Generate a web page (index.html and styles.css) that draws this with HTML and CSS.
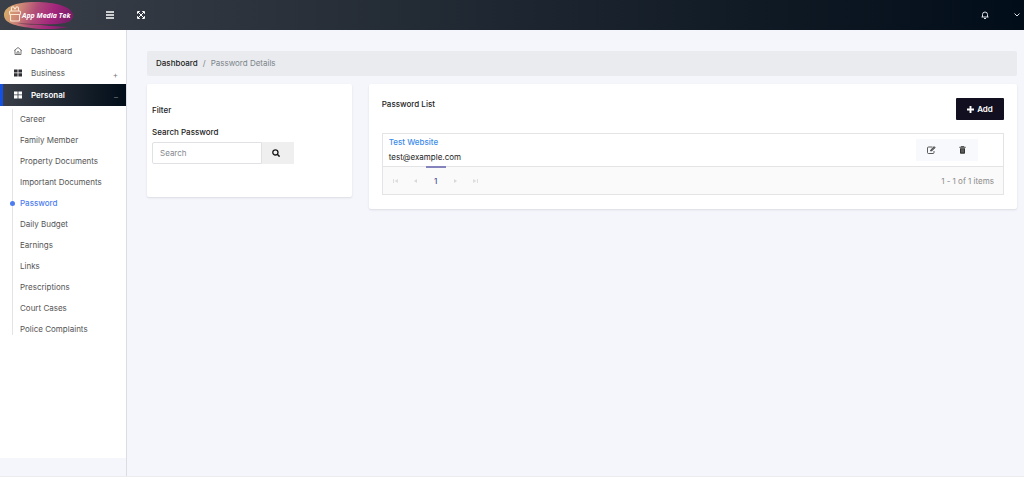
FILE: index.html
```html
<!DOCTYPE html>
<html lang="en">
<head>
<meta charset="utf-8">
<meta name="viewport" content="width=device-width, initial-scale=1">
<title>Password Details</title>
<link rel="stylesheet" href="styles.css">
</head>
<body>
<header class="topbar">
  <a class="brand" href="#" aria-label="App Media Tek">
    <svg class="logo" viewBox="0 0 72 28" role="img" aria-label="App Media Tek">
      <defs>
        <linearGradient id="blob" x1="0" y1="0" x2="1" y2="0.15">
          <stop offset="0" stop-color="#d9b565"/>
          <stop offset="0.25" stop-color="#cf8a76"/>
          <stop offset="0.5" stop-color="#b04a78"/>
          <stop offset="0.75" stop-color="#a3267c"/>
          <stop offset="1" stop-color="#7d1e6b"/>
        </linearGradient>
      </defs>
      <path fill="url(#blob)" d="M1 14C1 6 12 1 32 1c22 0 36 5 38 12 1 5-3 8-8 9-10 2-20 1-30 1 10 2 22 2 33 3-8 2-23 3-37 1C12 25 1 22 1 14z"/>
      <path fill="#5d3d48" opacity=".7" d="M14 22c14 1 25 1 40 1-12 1-28 2-40-1z"/>
      <g fill="none" stroke="#fbe6d4" stroke-width="1.100">
        <rect x="6.500" y="10" width="11" height="3.500" rx="1"/>
        <path d="M7.500 13.500v5.500q0 1 1 1h7q1 0 1-1v-5.500M8.500 10V7.500q0-2 2-1.500l1.500 2 1.500-2q2-.5 2 1.500V10"/>
      </g>
      <text class="logo-text" x="19" y="17">App Media Tek</text>
    </svg>
  </a>
  <button class="bar-btn" type="button" aria-label="Toggle menu">
    <svg width="8" height="8" viewBox="0 0 8 8"><path d="M0 1h8M0 4h8M0 7h8" stroke="#fff" stroke-width="1.300"/></svg>
  </button>
  <button class="bar-btn" type="button" aria-label="Full screen">
    <svg width="8" height="8" viewBox="0 0 8 8" fill="none" stroke="#fff"><path d="M1 1l6 6M7 1L1 7" stroke-width="1"/><path d="M.5 2.800V.5h2.300M5.200.5h2.300v2.300M7.500 5.200v2.300H5.200M2.800 7.500H.5V5.200" stroke-width="1"/></svg>
  </button>
  <div class="bar-right">
    <button class="bar-btn" type="button" aria-label="Notifications">
      <svg width="8" height="8" viewBox="0 0 8 8" fill="none" stroke="#dfe3e8" stroke-width="1"><path d="M.5 6h7M1.500 6V3.500a2.500 2.500 0 0 1 5 0V6M3 7.500h2"/></svg>
    </button>
    <button class="bar-btn" type="button" aria-label="Account menu">
      <svg width="6" height="4" viewBox="0 0 6 4" fill="none" stroke="#dfe3e8"><path d="M.5.500L3 3 5.500.500"/></svg>
    </button>
  </div>
</header>
<div class="shell">
  <nav class="sidebar" aria-label="Main">
    <div class="menu">
      <a class="item" href="#">
        <svg width="8" height="8" viewBox="0 0 8 8" fill="none" stroke="#555" stroke-width=".8"><path d="M.3 3.500L4 .5l3.700 3M1 3v4.500h6V3M3 7.500V5q1-1 2 0v2.500"/></svg>
        <span>Dashboard</span>
      </a>
      <a class="item" href="#">
        <svg width="8" height="8" viewBox="0 0 8 8" fill="#2f2f33"><path d="M0 .5h3.600v3H0zM4.400.5H8v3H4.400zM0 4.300h3.600v3.200H0zM4.400 4.300H8v3.200H4.400z"/></svg>
        <span>Business</span><span class="sign">+</span>
      </a>
      <a class="item open" href="#">
        <svg width="8" height="8" viewBox="0 0 8 8" fill="#fff"><path d="M0 .5h3.600v3H0zM4.400.5H8v3H4.400zM0 4.300h3.600v3.200H0zM4.400 4.300H8v3.200H4.400z"/></svg>
        <span>Personal</span><span class="sign">–</span>
      </a>
      <ul class="submenu">
        <li><a href="#">Career</a></li>
        <li><a href="#">Family Member</a></li>
        <li><a href="#">Property Documents</a></li>
        <li><a href="#">Important Documents</a></li>
        <li class="current"><a href="#" aria-current="page">Password</a></li>
        <li><a href="#">Daily Budget</a></li>
        <li><a href="#">Earnings</a></li>
        <li><a href="#">Links</a></li>
        <li><a href="#">Prescriptions</a></li>
        <li><a href="#">Court Cases</a></li>
        <li><a href="#">Police Complaints</a></li>
      </ul>
    </div>
  </nav>
  <main class="content">
    <nav class="crumbs" aria-label="Breadcrumb"><a href="#">Dashboard</a><span>/</span><span>Password Details</span></nav>
    <div class="columns">
      <section class="card filter">
        <h2>Filter</h2>
        <label for="search">Search Password</label>
        <div class="search">
          <input id="search" type="text" placeholder="Search">
          <button type="button" aria-label="Search">
            <svg width="8" height="8" viewBox="0 0 8 8" fill="none" stroke="#151515"><circle cx="3.400" cy="3.400" r="2.600" stroke-width="1.300"/><path d="M5.300 5.300l2.300 2.300" stroke-width="1.500"/></svg>
          </button>
        </div>
      </section>
      <section class="card list">
        <div class="list-head">
          <h2>Password List</h2>
          <button class="add" type="button"><svg width="7" height="7" viewBox="0 0 7 7"><path d="M3.500 0v7M0 3.500h7" stroke="#fff" stroke-width="1.900"/></svg>Add</button>
        </div>
        <div class="grid">
          <div class="row">
            <div class="entry"><a href="#">Test Website</a><span>test@example.com</span></div>
            <div class="actions">
              <button type="button" aria-label="Edit"><svg width="9" height="8" viewBox="0 0 9 8" fill="none" stroke="#333"><path d="M5.500 1H1.500q-1 0-1 1v4.500q0 1 1 1H6q1 0 1-1V5" stroke-width=".8"/><path d="M3.600 5l.3-1.200L7.200.6l1 1-3.300 3.100z" stroke-width=".8" fill="#777"/></svg></button>
              <button type="button" aria-label="Delete"><svg width="7" height="8" viewBox="0 0 7 8"><path d="M.3 1.300h6.400M2.300 1V.4h2.400V1" stroke="#222" stroke-width=".8" fill="none"/><path d="M1 2.200h5v4.800q0 .8-.8.8H1.800Q1 7.800 1 7z" fill="#333"/><path d="M2.500 3.200v3.300M3.500 3.200v3.300M4.500 3.200v3.300" stroke="#999" stroke-width=".4"/></svg></button>
            </div>
          </div>
          <div class="pager">
            <button type="button" disabled aria-label="First page"><svg width="5" height="4" viewBox="0 0 5 4" fill="#dedede"><path d="M0 0h1v4H0zM5 0v4L1.500 2z"/></svg></button>
            <button type="button" disabled aria-label="Previous page"><svg width="5" height="4" viewBox="0 0 5 4" fill="#d8d8d8"><path d="M4 0v4L1 2z"/></svg></button>
            <button type="button" class="page" aria-current="page">1</button>
            <button type="button" disabled aria-label="Next page"><svg width="5" height="4" viewBox="0 0 5 4" fill="#d8d8d8"><path d="M1 0v4l3-2z"/></svg></button>
            <button type="button" disabled aria-label="Last page"><svg width="5" height="4" viewBox="0 0 5 4" fill="#dedede"><path d="M4 0h1v4H4zM0 0v4l3.500-2z"/></svg></button>
            <span class="total">1 - 1 of 1 items</span>
          </div>
        </div>
      </section>
    </div>
  </main>
</div>
</body>
</html>
```
FILE: styles.css
```css
* { box-sizing: border-box; }
body {
  margin: 0;
  min-height: 100vh;
  display: flex;
  flex-direction: column;
  font: 8px/12px Inter, "Open Sans", sans-serif;
  color: #222;
  background: #fff;
}
a { color: inherit; text-decoration: none; }
button, input { font: inherit; color: inherit; margin: 0; padding: 0; border: 0; background: none; }
svg { display: block; flex: none; }
h2 { margin: 0; font: inherit; font-weight: 500; }

.topbar {
  display: flex;
  align-items: center;
  height: 30px;
  background: linear-gradient(90deg, #3a3f48, #010d19);
}
.brand { width: 94px; padding-left: 3px; }
.logo { width: 72px; height: 28px; }
.logo-text { font: italic 700 7px "Open Sans", sans-serif; fill: #fff; }
.bar-btn { display: flex; justify-content: center; align-items: center; width: 31px; height: 28px; }
.bar-right { display: flex; margin-left: auto; }
.bar-right .bar-btn:last-child { width: 24px; padding-left: 9px; }

.shell { flex: 1; display: flex; margin-bottom: 2px; background: #f5f6fb; border-bottom: 1px solid #ececf0; }
.sidebar { flex: none; width: 127px; border-right: 1px solid #dcdde2; padding-bottom: 18px; display: flex; }
.menu { flex: 1; padding-top: 10px; background: #fff; color: #555; }
.item {
  display: flex;
  align-items: center;
  gap: 9px;
  height: 22px;
  padding: 0 8px 0 11px;
  border-left: 3px solid transparent;
}
.item.open { color: #fff; font-weight: 600; border-left-color: #1451e0; background: linear-gradient(90deg, #3a3f48, #010d19); }
.sign { margin-left: auto; padding-top: 4px; font-weight: 400; color: #777; }
.submenu { list-style: none; margin: 3px 0 0 12px; padding: 0; border-left: 1px solid #e3e3e8; }
.submenu li { position: relative; height: 21px; padding-left: 7px; line-height: 21px; }
.submenu li:last-child { height: 16px; }
.submenu .current { color: #4c7cf0; font-weight: 500; }
.submenu .current::before {
  content: "";
  position: absolute;
  left: -3px;
  top: 8px;
  width: 5px;
  height: 5px;
  border-radius: 50%;
  background: #4c7cf0;
}

.content { flex: 1; min-width: 0; padding: 21px 7px 21px 20px; }
.crumbs { display: flex; gap: 5px; padding: 6px 9px; height: 25px; margin-bottom: 8px; background: #e9ebee; border-radius: 2px; color: #7d858c; }
.crumbs a { color: #222; font-weight: 500; }
.columns { display: grid; grid-template-columns: repeat(12, 1fr); gap: 17px; align-items: start; }
.card { background: #fff; border-radius: 2px; box-shadow: 0 1px 2px #d9dbe4; }
.filter { grid-column: span 3; padding: 20px 5px 33px; }
.filter h2 { margin-bottom: 10px; }
.filter label { display: block; margin-bottom: 4px; font-weight: 500; }
.search { display: flex; width: 142px; }
.search input { flex: 1; min-width: 0; height: 22px; padding: 0 7px; border: 1px solid #dfe1e5; border-radius: 2px 0 0 2px; background: #fff; }
.search input::placeholder { color: #85898f; opacity: 1; }
.search button { display: flex; align-items: center; justify-content: center; width: 32px; padding-right: 4px; background: #efefef; }

.list { grid-column: span 9; padding: 14px 13px; }
.list-head { display: flex; justify-content: space-between; margin-bottom: 13px; }
.list-head .add {
  display: flex;
  align-items: center;
  justify-content: center;
  gap: 3px;
  width: 48px;
  height: 22px;
  color: #fff;
  font-weight: 600;
  background: #110f20;
  border-radius: 1px;
}
.grid { border: 1px solid #e4e4e6; }
.row { display: flex; justify-content: space-between; padding: 2px 25px 3px 6px; }
.entry { display: flex; flex-direction: column; gap: 3px; }
.entry a { color: #3d8bea; font-weight: 500; }
.actions { display: flex; align-self: center; background: #f8f9fc; }
.actions button { display: flex; align-items: center; justify-content: center; width: 31px; height: 22px; }
.pager { display: flex; height: 28px; padding: 0 9px 0 3px; border-top: 1px solid #e4e4e6; background: #fafafa; }
.pager button { display: flex; align-items: center; justify-content: center; width: 20px; height: 27px; }
.pager .page { color: #4b4aa0; border-top: 2px solid #8583bb; margin-top: -1px; font-weight: 500; }
.total { margin-left: auto; align-self: center; color: #8b8b8b; }
```
